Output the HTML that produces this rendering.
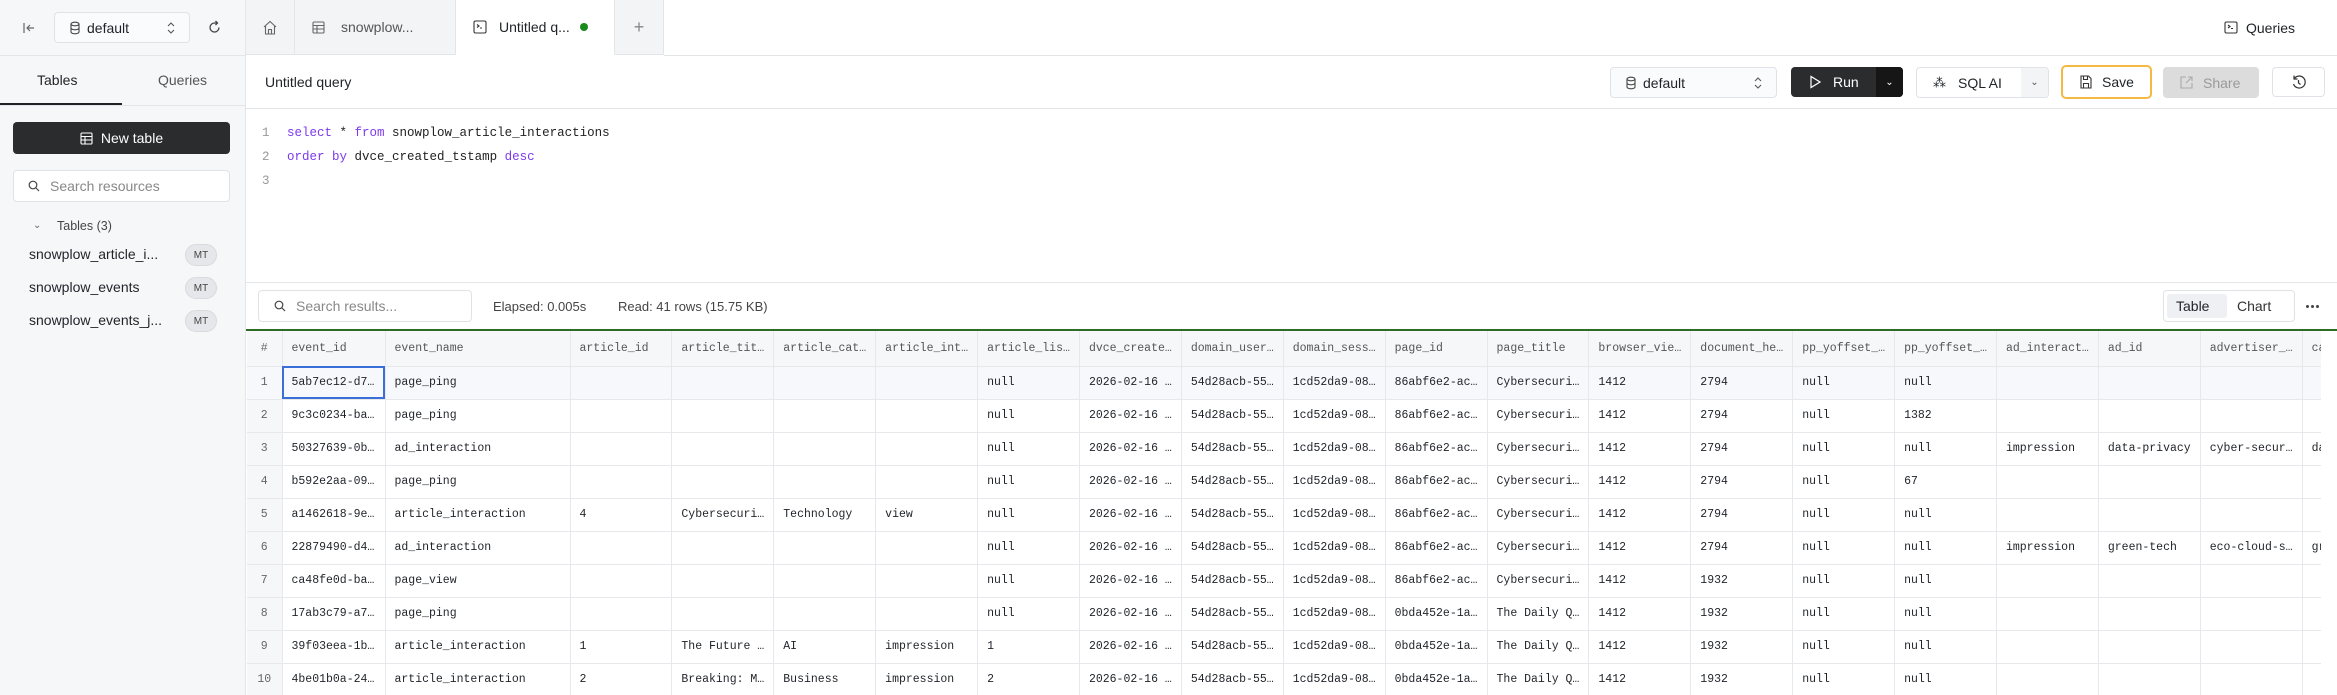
<!DOCTYPE html>
<html><head><meta charset="utf-8"><style>
*{box-sizing:border-box;margin:0;padding:0}
body{width:2337px;height:695px;overflow:hidden;background:#fff;font-family:"Liberation Sans",sans-serif;color:#1f2328;position:relative}
.abs{position:absolute}
.side{left:0;top:0;width:246px;height:695px;background:#f6f7f9;border-right:1px solid #e3e5e8}
.btn{position:absolute;border:1px solid #dfe2e6;border-radius:4px;background:#fff;display:flex;align-items:center;font-size:14px}
.mt{position:absolute;left:185px;width:32px;height:22px;border-radius:11px;background:#e6e7ea;font-size:10px;color:#444;display:flex;align-items:center;justify-content:center;border:1px solid #d8dadd}
.item{position:absolute;left:29px;font-size:14px;color:#1f2328}
.tab{position:absolute;top:0;height:55px;background:#f3f4f6;border-right:1px solid #e3e5e8;border-bottom:1px solid #e3e5e8;display:flex;align-items:center;font-size:14px;color:#555}
svg{display:block}
table{border-collapse:collapse;table-layout:fixed;font-family:"Liberation Mono",monospace;font-size:11.5px}
td,th{height:33px;border-right:1px solid #e6e8eb;border-bottom:1px solid #e6e8eb;white-space:nowrap;overflow:hidden;text-align:left;padding:0 0 0 9px;font-weight:normal}
th{color:#555;background:#f6f7f9;height:35px}
td.n,th.n{text-align:center;padding:0;color:#666;background:#f6f7f9}
tr.r1 td{background:#f7f8fb}
.kw{color:#7c3aed}
.dot{display:inline-block;width:3px;height:3px;border-radius:2px;background:#444;margin-right:2px}
col.c{width:101.9px}
</style></head><body>
<div class="abs side"></div>
<div class="abs" style="left:0;top:55px;width:246px;height:1px;background:#e3e5e8"></div>
<svg class="abs" style="left:22px;top:21px" width="14" height="14" viewBox="0 0 14 14" fill="none" stroke="#666" stroke-width="1.2"><path d="M2 2v10M12 7H5M8 4L5 7l3 3"/></svg>
<div class="btn" style="left:54px;top:12px;width:136px;height:31px;background:#fafbfc">
<svg style="margin-left:14px" width="12" height="14" viewBox="0 0 12 14" fill="none" stroke="#444" stroke-width="1.1"><ellipse cx="6" cy="3" rx="4" ry="1.8"/><path d="M2 3v8c0 1 1.8 1.8 4 1.8s4-.8 4-1.8V3M2 7c0 1 1.8 1.8 4 1.8S10 8 10 7"/></svg>
<span style="margin-left:6px">default</span>
<svg style="margin-left:auto;margin-right:14px" width="8" height="14" viewBox="0 0 8 14" fill="none" stroke="#555" stroke-width="1.1"><path d="M1 5l3-3 3 3M1 9l3 3 3-3"/></svg></div>
<svg class="abs" style="left:207px;top:20px" width="15" height="15" viewBox="0 0 15 15" fill="none" stroke="#444" stroke-width="1.3"><path d="M12 7.5A4.5 4.5 0 1 1 7.5 3H10M8.5 1l2 2-2 2"/></svg>
<div class="abs" style="left:37px;top:72px;font-size:14px">Tables</div>
<div class="abs" style="left:158px;top:72px;font-size:14px;color:#555">Queries</div>
<div class="abs" style="left:0;top:103px;width:122px;height:2px;background:#1f2328"></div>
<div class="abs" style="left:0;top:105px;width:246px;height:1px;background:#e3e5e8"></div>
<div class="abs" style="left:13px;top:122px;width:217px;height:32px;background:#2b2c2e;border-radius:4px;color:#fff;font-size:14px;display:flex;align-items:center;justify-content:center">
<svg width="13" height="13" viewBox="0 0 13 13" fill="none" stroke="#fff" stroke-width="1.1"><rect x="1" y="1" width="11" height="11" rx="1"/><path d="M1 4.5h11M1 8h11M5 4.5V12"/></svg><span style="margin-left:8px">New table</span></div>
<div class="btn" style="left:13px;top:170px;width:217px;height:32px;color:#888;border-color:#e0e2e5">
<svg style="margin-left:14px" width="12" height="12" viewBox="0 0 12 12" fill="none" stroke="#444" stroke-width="1.2"><circle cx="5" cy="5" r="3.8"/><path d="M8 8l3 3"/></svg><span style="margin-left:10px">Search resources</span></div>
<div class="abs" style="left:33px;top:220px;font-size:10px;color:#666">⌄</div>
<div class="abs" style="left:57px;top:219px;font-size:12.5px;color:#444">Tables (3)</div>
<div class="item" style="top:246px">snowplow_article_i...</div><div class="mt" style="top:244px">MT</div>
<div class="item" style="top:279px">snowplow_events</div><div class="mt" style="top:277px">MT</div>
<div class="item" style="top:312px">snowplow_events_j...</div><div class="mt" style="top:310px">MT</div>
<div class="tab" style="left:246px;width:49px;justify-content:center"><svg width="14" height="15" viewBox="0 0 14 15" fill="none" stroke="#666" stroke-width="1.1"><path d="M1 7L7 1.5 13 7M2.5 5.5V14h9V5.5M5.5 14V9.5h3V14"/></svg></div>
<div class="tab" style="left:295px;width:161px"><svg style="margin-left:17px" width="13" height="13" viewBox="0 0 13 13" fill="none" stroke="#666" stroke-width="1.1"><rect x="1" y="1" width="11" height="11" rx="1"/><path d="M1 4.5h11M1 8h11M5 4.5V12"/></svg><span style="margin-left:16px">snowplow...</span></div>
<div class="tab" style="left:456px;width:159px;background:#fff;border-bottom-color:#fff;color:#1f2328"><svg style="margin-left:17px" width="14" height="14" viewBox="0 0 14 14" fill="none" stroke="#333" stroke-width="1.1"><rect x="1" y="1" width="12" height="12" rx="1.5"/><path d="M4 4.5l2 1.5-2 1.5M7 8h2"/></svg><span style="margin-left:12px">Untitled q...</span><span style="margin-left:10px;width:8px;height:8px;border-radius:4px;background:#1a8a1a;display:inline-block"></span></div>
<div class="tab" style="left:615px;width:49px;justify-content:center;font-size:18px;color:#888">+</div>
<div class="abs" style="left:664px;top:55px;width:1673px;height:1px;background:#e3e5e8"></div>
<svg class="abs" style="left:2224px;top:21px" width="14" height="13" viewBox="0 0 14 13" fill="none" stroke="#333" stroke-width="1.1"><rect x="1" y="1" width="12" height="11" rx="1.5"/><path d="M4 4l2 1.5-2 1.5M7 7.5h2"/></svg>
<div class="abs" style="left:2246px;top:20px;font-size:14px">Queries</div>
<div class="abs" style="left:265px;top:74px;font-size:14px">Untitled query</div>
<div class="btn" style="left:1610px;top:67px;width:167px;height:31px;background:#fafbfc">
<svg style="margin-left:14px" width="12" height="14" viewBox="0 0 12 14" fill="none" stroke="#444" stroke-width="1.1"><ellipse cx="6" cy="3" rx="4" ry="1.8"/><path d="M2 3v8c0 1 1.8 1.8 4 1.8s4-.8 4-1.8V3M2 7c0 1 1.8 1.8 4 1.8S10 8 10 7"/></svg>
<span style="margin-left:6px">default</span>
<svg style="margin-left:auto;margin-right:14px" width="8" height="14" viewBox="0 0 8 14" fill="none" stroke="#555" stroke-width="1.1"><path d="M1 5l3-3 3 3M1 9l3 3 3-3"/></svg></div>
<div class="abs" style="left:1791px;top:67px;width:112px;height:30px;background:#2b2c2e;border-radius:4px;overflow:hidden;color:#fff;font-size:14px;display:flex;align-items:center">
<svg style="margin-left:18px" width="12" height="14" viewBox="0 0 12 14" fill="none" stroke="#fff" stroke-width="1.2"><path d="M2 1.5v11l9-5.5z"/></svg><span style="margin-left:12px">Run</span>
<div style="margin-left:auto;width:27px;height:30px;background:#161617;display:flex;align-items:center;justify-content:center;font-size:10px">⌄</div></div>
<div class="btn" style="left:1916px;top:67px;width:133px;height:31px;overflow:hidden">
<span style="margin-left:16px;font-size:13px">⁂</span><span style="margin-left:12px">SQL AI</span>
<div style="margin-left:auto;width:27px;height:31px;background:#f3f4f6;display:flex;align-items:center;justify-content:center;font-size:10px;color:#555">⌄</div></div>
<div class="btn" style="left:2061px;top:65px;width:91px;height:34px;border:2px solid #f5b942;border-radius:5px">
<svg style="margin-left:17px" width="12" height="14" viewBox="0 0 12 14" fill="none" stroke="#333" stroke-width="1.1"><path d="M1 1h7.5L11 3.5V13H1z"/><path d="M3.5 1v3.5h4V1M3.5 13V8.5h5V13"/></svg><span style="margin-left:10px">Save</span></div>
<div class="abs" style="left:2163px;top:67px;width:96px;height:31px;background:#dcdcdc;border-radius:4px;color:#9a9a9a;font-size:14px;display:flex;align-items:center">
<svg style="margin-left:17px" width="13" height="13" viewBox="0 0 13 13" fill="none" stroke="#aaa" stroke-width="1.1"><path d="M6 1H1v11h11V7M8 1h4v4M12 1L6 7"/></svg><span style="margin-left:10px">Share</span></div>
<div class="btn" style="left:2272px;top:67px;width:53px;height:30px;justify-content:center">
<svg width="15" height="16" viewBox="0 0 15 16" fill="none" stroke="#333" stroke-width="1.2"><path d="M3 5a6 6 0 1 1-.5 5M3 1.5V5h3.5M7.5 6v3l2 1.5"/></svg></div>
<div class="abs" style="left:246px;top:108px;width:2091px;height:1px;background:#e3e5e8"></div>
<div class="abs" style="left:262px;top:121px;font-family:'Liberation Mono',monospace;font-size:12.5px;line-height:24px;color:#999">1<br>2<br>3</div>
<div class="abs" style="left:287px;top:121px;font-family:'Liberation Mono',monospace;font-size:12.5px;line-height:24px;color:#222;white-space:pre"><span class="kw">select</span> * <span class="kw">from</span> snowplow_article_interactions
<span class="kw">order</span> <span class="kw">by</span> dvce_created_tstamp <span class="kw">desc</span></div>
<div class="abs" style="left:246px;top:282px;width:2091px;height:1px;background:#e3e5e8"></div>
<div class="btn" style="left:258px;top:290px;width:214px;height:32px;color:#888;border-color:#e0e2e5">
<svg style="margin-left:15px" width="12" height="12" viewBox="0 0 12 12" fill="none" stroke="#444" stroke-width="1.2"><circle cx="5" cy="5" r="3.8"/><path d="M8 8l3 3"/></svg><span style="margin-left:10px">Search results...</span></div>
<div class="abs" style="left:493px;top:299px;font-size:13px;color:#444">Elapsed: 0.005s</div>
<div class="abs" style="left:618px;top:299px;font-size:13px;color:#444">Read: 41 rows (15.75 KB)</div>
<div class="abs" style="left:2163px;top:290px;width:132px;height:32px;border:1px solid #e0e2e5;border-radius:4px;font-size:14px">
<div class="abs" style="left:3px;top:3px;width:60px;height:24px;background:#eef0f3;border-radius:3px"></div>
<div class="abs" style="left:12px;top:7px">Table</div><div class="abs" style="left:73px;top:7px;color:#333">Chart</div></div>
<div class="abs" style="left:2306px;top:305px;display:flex"><span class="dot"></span><span class="dot"></span><span class="dot"></span></div>
<div class="abs" style="left:246px;top:329px;width:2091px;height:2px;background:#2e6b26"></div>
<div class="abs" style="left:247px;top:331px;width:2074px;height:364px;overflow:hidden">
<table style="width:2155px">
<colgroup><col style="width:35px"><col style="width:103px"><col style="width:185px"><col class="c"><col class="c"><col class="c"><col class="c"><col class="c"><col class="c"><col class="c"><col class="c"><col class="c"><col class="c"><col class="c"><col class="c"><col class="c"><col class="c"><col class="c"><col class="c"><col class="c"><col class="c"></colgroup>
<tr><th class="n">#</th><th>event_id</th><th>event_name</th><th>article_id</th><th>article_tit…</th><th>article_cat…</th><th>article_int…</th><th>article_lis…</th><th>dvce_create…</th><th>domain_user…</th><th>domain_sess…</th><th>page_id</th><th>page_title</th><th>browser_vie…</th><th>document_he…</th><th>pp_yoffset_…</th><th>pp_yoffset_…</th><th>ad_interact…</th><th>ad_id</th><th>advertiser_…</th><th>ca</th></tr>
<tr class="r1"><td class="n">1</td><td style="outline:2px solid #3b6fd8;outline-offset:-2px">5ab7ec12-d7…</td><td>page_ping</td><td></td><td></td><td></td><td></td><td>null</td><td>2026-02-16 …</td><td>54d28acb-55…</td><td>1cd52da9-08…</td><td>86abf6e2-ac…</td><td>Cybersecuri…</td><td>1412</td><td>2794</td><td>null</td><td>null</td><td></td><td></td><td></td><td></td></tr>
<tr><td class="n">2</td><td>9c3c0234-ba…</td><td>page_ping</td><td></td><td></td><td></td><td></td><td>null</td><td>2026-02-16 …</td><td>54d28acb-55…</td><td>1cd52da9-08…</td><td>86abf6e2-ac…</td><td>Cybersecuri…</td><td>1412</td><td>2794</td><td>null</td><td>1382</td><td></td><td></td><td></td><td></td></tr>
<tr><td class="n">3</td><td>50327639-0b…</td><td>ad_interaction</td><td></td><td></td><td></td><td></td><td>null</td><td>2026-02-16 …</td><td>54d28acb-55…</td><td>1cd52da9-08…</td><td>86abf6e2-ac…</td><td>Cybersecuri…</td><td>1412</td><td>2794</td><td>null</td><td>null</td><td>impression</td><td>data-privacy</td><td>cyber-secur…</td><td>da</td></tr>
<tr><td class="n">4</td><td>b592e2aa-09…</td><td>page_ping</td><td></td><td></td><td></td><td></td><td>null</td><td>2026-02-16 …</td><td>54d28acb-55…</td><td>1cd52da9-08…</td><td>86abf6e2-ac…</td><td>Cybersecuri…</td><td>1412</td><td>2794</td><td>null</td><td>67</td><td></td><td></td><td></td><td></td></tr>
<tr><td class="n">5</td><td>a1462618-9e…</td><td>article_interaction</td><td>4</td><td>Cybersecuri…</td><td>Technology</td><td>view</td><td>null</td><td>2026-02-16 …</td><td>54d28acb-55…</td><td>1cd52da9-08…</td><td>86abf6e2-ac…</td><td>Cybersecuri…</td><td>1412</td><td>2794</td><td>null</td><td>null</td><td></td><td></td><td></td><td></td></tr>
<tr><td class="n">6</td><td>22879490-d4…</td><td>ad_interaction</td><td></td><td></td><td></td><td></td><td>null</td><td>2026-02-16 …</td><td>54d28acb-55…</td><td>1cd52da9-08…</td><td>86abf6e2-ac…</td><td>Cybersecuri…</td><td>1412</td><td>2794</td><td>null</td><td>null</td><td>impression</td><td>green-tech</td><td>eco-cloud-s…</td><td>gr</td></tr>
<tr><td class="n">7</td><td>ca48fe0d-ba…</td><td>page_view</td><td></td><td></td><td></td><td></td><td>null</td><td>2026-02-16 …</td><td>54d28acb-55…</td><td>1cd52da9-08…</td><td>86abf6e2-ac…</td><td>Cybersecuri…</td><td>1412</td><td>1932</td><td>null</td><td>null</td><td></td><td></td><td></td><td></td></tr>
<tr><td class="n">8</td><td>17ab3c79-a7…</td><td>page_ping</td><td></td><td></td><td></td><td></td><td>null</td><td>2026-02-16 …</td><td>54d28acb-55…</td><td>1cd52da9-08…</td><td>0bda452e-1a…</td><td>The Daily Q…</td><td>1412</td><td>1932</td><td>null</td><td>null</td><td></td><td></td><td></td><td></td></tr>
<tr><td class="n">9</td><td>39f03eea-1b…</td><td>article_interaction</td><td>1</td><td>The Future …</td><td>AI</td><td>impression</td><td>1</td><td>2026-02-16 …</td><td>54d28acb-55…</td><td>1cd52da9-08…</td><td>0bda452e-1a…</td><td>The Daily Q…</td><td>1412</td><td>1932</td><td>null</td><td>null</td><td></td><td></td><td></td><td></td></tr>
<tr><td class="n">10</td><td>4be01b0a-24…</td><td>article_interaction</td><td>2</td><td>Breaking: M…</td><td>Business</td><td>impression</td><td>2</td><td>2026-02-16 …</td><td>54d28acb-55…</td><td>1cd52da9-08…</td><td>0bda452e-1a…</td><td>The Daily Q…</td><td>1412</td><td>1932</td><td>null</td><td>null</td><td></td><td></td><td></td><td></td></tr>
</table></div>
</body></html>
